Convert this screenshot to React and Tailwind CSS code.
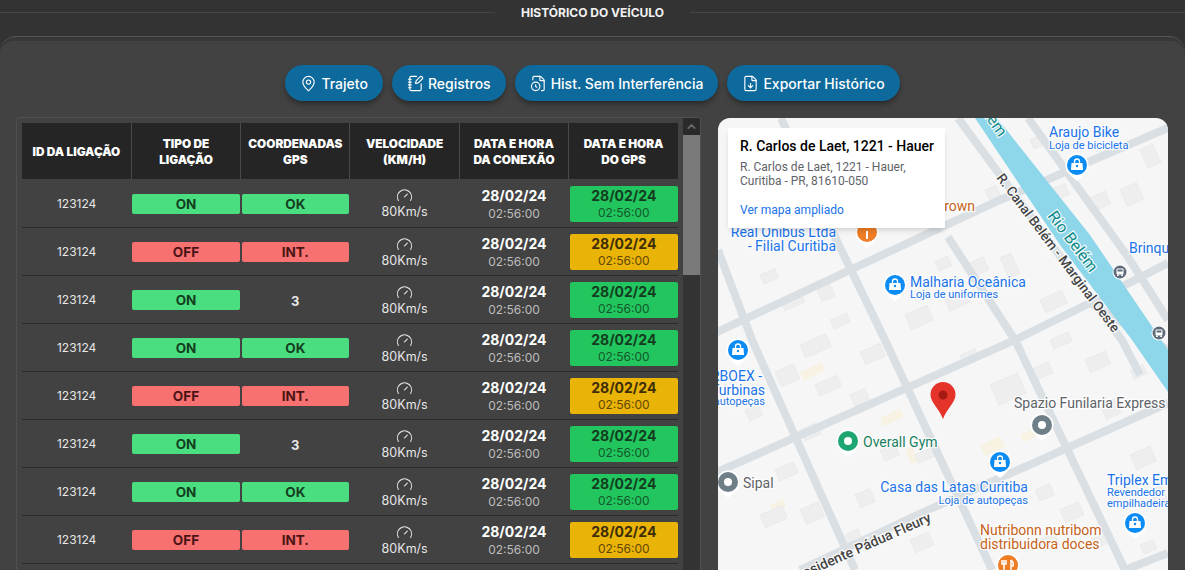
import { MapPin, NotebookPen, FileClock, FileDown, Gauge, ChevronUp } from 'lucide-react';

const rows = [
  { power: 'ON', gps: 'OK' },
  { power: 'OFF', gps: 'INT.' },
  { power: 'ON', gps: '3' },
  { power: 'ON', gps: 'OK' },
  { power: 'OFF', gps: 'INT.' },
  { power: 'ON', gps: '3' },
  { power: 'ON', gps: 'OK' },
  { power: 'OFF', gps: 'INT.' },
];

const headers = [
  ['ID DA LIGAÇÃO'],
  ['TIPO DE', 'LIGAÇÃO'],
  ['COORDENADAS', 'GPS'],
  ['VELOCIDADE', '(KM/H)'],
  ['DATA E HORA', 'DA CONEXÃO'],
  ['DATA E HORA', 'DO GPS'],
];

const actions = [
  { label: 'Trajeto', Icon: MapPin },
  { label: 'Registros', Icon: NotebookPen },
  { label: 'Hist. Sem Interferência', Icon: FileClock },
  { label: 'Exportar Histórico', Icon: FileDown },
];

// map geometry, in page coordinates (viewBox starts at the map corner)
const roads = [
  'M718 250 L752 340 L855 570',
  'M781 118 L835 237 L885 340 L992 570',
  'M948 237 L1015 340 L1125 570',
  'M958 118 L1122 340 L1140 375',
  'M1028 118 L1128 257 L1168 320',
  'M715 333 L1000 200 L1168 128',
  'M715 473 L1015 340 L1090 303 L1168 263',
  'M800 570 L928 510 L1168 403',
  'M1125 570 L1168 553',
  'M1090 303 L1168 350',
];

const buildings = [
  [780, 300, 22, 12], [815, 285, 14, 18], [760, 275, 16, 10], [800, 345, 28, 14], [830, 320, 18, 10],
  [775, 372, 20, 16], [815, 385, 24, 12], [860, 352, 22, 14], [850, 395, 16, 20], [905, 315, 24, 16],
  [945, 300, 22, 12], [965, 265, 20, 14], [935, 262, 14, 10], [1000, 258, 12, 22], [1050, 190, 16, 12],
  [1085, 200, 22, 14], [1120, 190, 18, 18], [1140, 150, 14, 20], [1030, 140, 14, 10], [985, 190, 12, 16],
  [1040, 300, 24, 14], [1050, 340, 20, 10], [1085, 360, 22, 14], [1130, 370, 14, 10], [1100, 405, 16, 16],
  [990, 385, 30, 22], [1030, 370, 20, 12], [960, 355, 16, 9], [880, 450, 16, 12], [915, 455, 20, 9],
  [800, 430, 18, 12], [775, 470, 20, 12], [760, 515, 24, 14], [800, 510, 20, 16], [855, 495, 16, 14],
  [845, 535, 14, 16], [910, 540, 20, 14], [1035, 490, 16, 12], [1060, 510, 20, 14], [1040, 540, 16, 12],
  [1130, 455, 22, 16], [1150, 490, 12, 18], [1090, 540, 14, 10], [1140, 545, 14, 10], [745, 410, 14, 12],
];

const tanBlocks = [
  [800, 372, 24, 9], [880, 418, 22, 9], [980, 445, 22, 12], [1020, 435, 20, 8], [905, 450, 8, 16], [770, 505, 14, 8],
];

function Pin({ x, y, color, glyph = 'dot' }) {
  return (
    <g transform={`translate(${x} ${y})`}>
      <path d="M-11.5 4 Q-8 10 0 16 Q8 10 11.5 4 Z" fill="#ffffff" />
      <circle r="11.5" fill="#ffffff" />
      <circle r="10" fill={color} />
      {glyph === 'dot' && <circle r="4" fill="#ffffff" />}
      {glyph === 'bag' && (
        <>
          <path d="M-5.5 -2 H5.5 L6 5 H-6 Z" fill="#ffffff" />
          <path d="M-2.5 -2 V-3.5 A2.5 2.5 0 0 1 2.5 -3.5 V-2" fill="none" stroke="#ffffff" strokeWidth="1.3" />
          <circle cy="1" r="1.2" fill={color} />
        </>
      )}
      {glyph === 'food' && (
        <path d="M-4 -5 V5 M-6 -5 V-1 H-2 V-5 M3 -5 V5 M3 -5 Q6 -3 5 1 H3" fill="none" stroke="#ffffff" strokeWidth="1.5" />
      )}
      {glyph === 'one' && <rect x="-1" y="-1" width="2" height="8" fill="#ffffff" />}
    </g>
  );
}

function BusStop({ x, y }) {
  return (
    <g transform={`translate(${x} ${y})`}>
      <circle r="7.5" fill="#ffffff" />
      <circle r="6.5" fill="#5f6b7a" />
      <rect x="-3.5" y="-3.5" width="7" height="6" rx="1" fill="#ffffff" />
      <rect x="-2.5" y="-2.5" width="5" height="2" fill="#5f6b7a" />
      <rect x="-3" y="2.5" width="1.8" height="1.5" fill="#ffffff" />
      <rect x="1.2" y="2.5" width="1.8" height="1.5" fill="#ffffff" />
    </g>
  );
}

function Label({ x, y, size = 14, color = '#1a73e8', anchor = 'start', weight = 400, rotate, children }) {
  return (
    <text
      x={x}
      y={y}
      fontSize={size}
      fontWeight={weight}
      fill={color}
      textAnchor={anchor}
      stroke="#ffffff"
      strokeWidth="2.5"
      paintOrder="stroke"
      strokeOpacity="0.85"
      transform={rotate ? `rotate(${rotate} ${x} ${y})` : undefined}
    >
      {children}
    </text>
  );
}

function MapDrawing() {
  return (
    <svg viewBox="718 118 450 452" className="block w-full h-full font-['Roboto',sans-serif]">
      <rect x="718" y="118" width="450" height="452" fill="#f6f6f7" />
      {tanBlocks.map(([x, y, w, h], i) => (
        <rect key={i} x={x} y={y} width={w} height={h} fill="#f8f2e3" transform={`rotate(-24 ${x} ${y})`} />
      ))}
      {buildings.map(([x, y, w, h], i) => (
        <rect key={i} x={x} y={y} width={w} height={h} fill="#eeeeef" stroke="#e4e4e6" strokeWidth="0.5" transform={`rotate(-24 ${x} ${y})`} />
      ))}
      {roads.map((d, i) => (
        <path key={i} d={d} fill="none" stroke="#d9dfe3" strokeWidth="8" />
      ))}
      <path d="M975 118 H997 L1090 235 L1168 350 V392 L1132 340 L1060 245 Z" fill="#8ed6ea" />

      <Label x={984} y={116} size={16} color="#0f8a8a" rotate={55}>lém</Label>
      <Label x={1047} y={216} size={16} color="#0f8a8a" rotate={53}>Rio Belém</Label>
      <Label x={996} y={178} size={13.5} color="#444444" weight={500} rotate={53}>R. Canal Belém - Marginal Oeste</Label>
      <Label x={932} y={521} size={14} color="#444444" weight={500} anchor="end" rotate={-24}>Presidente Pádua Fleury</Label>

      <Label x={1049} y={137}>Araujo Bike</Label>
      <Label x={1049} y={149} size={11}>Loja de bicicleta</Label>
      <Label x={836} y={237} anchor="end">Real Onibus Ltda</Label>
      <Label x={836} y={251} anchor="end">- Filial Curitiba</Label>
      <Label x={975} y={211} color="#c5621a" anchor="end">Brown</Label>
      <Label x={910} y={287}>Malharia Oceânica</Label>
      <Label x={910} y={298} size={11}>Loja de uniformes</Label>
      <Label x={1129} y={253}>Brinquedos</Label>
      <Label x={762} y={381} anchor="end">RBOEX -</Label>
      <Label x={765} y={395} anchor="end">Turbinas</Label>
      <Label x={765} y={405} size={11} anchor="end">autopeças</Label>
      <Label x={1014} y={408} color="#5f6368">Spazio Funilaria Express</Label>
      <Label x={863} y={447} color="#188060">Overall Gym</Label>
      <Label x={743} y={488} color="#5f6368">Sipal</Label>
      <Label x={1028} y={492} anchor="end">Casa das Latas Curitiba</Label>
      <Label x={1028} y={504} size={11} anchor="end">Loja de autopeças</Label>
      <Label x={1107} y={485}>Triplex Empilhadeiras</Label>
      <Label x={1107} y={496} size={11}>Revendedor de</Label>
      <Label x={1107} y={507} size={11}>empilhadeiras</Label>
      <Label x={980} y={535} color="#c5621a">Nutribonn nutribom</Label>
      <Label x={980} y={549} color="#c5621a">distribuidora doces</Label>

      <Pin x={1077} y={165} color="#0b8cf5" glyph="bag" />
      <Pin x={895} y={285} color="#0b8cf5" glyph="bag" />
      <Pin x={738} y={350} color="#0b8cf5" glyph="bag" />
      <Pin x={1000} y={462} color="#0b8cf5" glyph="bag" />
      <Pin x={1135} y={523} color="#0b8cf5" glyph="bag" />
      <Pin x={1042} y={425} color="#6e7f88" />
      <Pin x={728} y={482} color="#6e7f88" />
      <Pin x={848} y={441} color="#1ea672" />
      <Pin x={867} y={232} color="#ee7d26" glyph="one" />
      <Pin x={1008} y={565} color="#ee7d26" glyph="food" />
      <BusStop x={1120} y={272} />
      <BusStop x={1159} y={333} />

      {/* red marker */}
      <path d="M943 419 C939 408 930.500 403 930.500 394.500 A12.500 12.500 0 0 1 955.500 394.500 C955.500 403 947 408 943 419 Z" fill="#e5352b" />
      <circle cx="943" cy="395" r="4.500" fill="#a61a14" />
    </svg>
  );
}

function StatusBadge({ value }) {
  if (value === '3') {
    return <span className="font-bold text-[13px] text-[#e8e8e8]">3</span>;
  }
  const good = value === 'ON' || value === 'OK';
  return (
    <div className={`h-5 rounded-[2px] flex items-center justify-center font-bold text-[13.5px] ${good ? 'bg-[#4ade80] text-[#14401f]' : 'bg-[#f87171] text-[#4a1414]'}`}>
      {value}
    </div>
  );
}

function HistoryRow({ row }) {
  const connected = row.power === 'ON';
  return (
    <tr className="h-12 border-b border-[#2b2b2b] [&>td]:pt-0.5">
      <td className="text-center text-[12px] text-[#e6e6e6] p-0">123124</td>
      <td className="p-0 pl-px pr-px"><StatusBadge value={row.power} /></td>
      <td className="p-0 pl-px pr-px text-center"><StatusBadge value={row.gps} /></td>
      <td className="p-0 text-center">
        <div className="flex flex-col items-center">
          <Gauge size={17} strokeWidth={1.5} className="text-[#e6e6e6]" />
          <span className="text-[12.5px] leading-4 text-[#e6e6e6]">80Km/s</span>
        </div>
      </td>
      <td className="p-0 text-center">
        <div className="pt-px">
          <div className="text-[14px] font-bold leading-[18px] text-white">28/02/24</div>
          <div className="mt-px text-[12px] leading-4 text-[#bdbdbd]">02:56:00</div>
        </div>
      </td>
      <td className="p-0 pl-px">
        <div className={`h-9 rounded-[2px] flex flex-col items-center justify-center ${connected ? 'bg-[#22c55e] text-[#123d20]' : 'bg-[#eab308] text-[#3d2d06]'}`}>
          <div className="text-[14px] font-bold leading-[18px]">28/02/24</div>
          <div className="text-[12px] leading-4 opacity-80">02:56:00</div>
        </div>
      </td>
    </tr>
  );
}

export default function App() {
  return (
    <div className="h-[570px] overflow-hidden bg-[#333333] font-['Inter',sans-serif]">
      <div className="h-9 flex items-start">
        <div className="flex-1 mt-3 border-t border-[#454545]" />
        <h1 className="px-[26px] pt-[5px] text-[12px] leading-4 font-bold text-[#f2f2f2] whitespace-nowrap">HISTÓRICO DO VEÍCULO</h1>
        <div className="flex-1 mt-3 border-t border-[#454545]" />
      </div>

      <div className="h-[534px] rounded-t-[16px] border-t border-[#565656] pt-1 bg-[#383838]">
        <div className="h-full rounded-t-[14px] bg-[#424242] px-4">
          <div className="flex justify-center gap-[9px] pt-6">
            {actions.map(({ label, Icon }) => (
              <button key={label} className="h-9 px-[15px] rounded-full bg-[#0e6a9c] shadow-md shadow-black/30 text-white text-[14px] font-medium flex items-center gap-1">
                <Icon size={17} strokeWidth={1.6} />
                {label}
              </button>
            ))}
          </div>

          <div className="flex gap-[17px] mt-4">
            <div className="w-[685px] shrink-0 h-[500px] flex border border-[#505050] rounded-t-[3px] overflow-hidden">
              <div className="w-[666px] pl-[5px] pr-[5px] pt-[5px]">
                <table className="w-full table-fixed border-collapse">
                  <thead>
                    <tr className="h-14 bg-[#252525]">
                      {headers.map((lines, i) => (
                        <th key={i} className={`p-0 pt-0.5 text-center text-[11.8px] leading-4 font-black text-white ${i > 0 ? 'border-l border-[#4a4a4a]' : ''}`}>
                          {lines.map((line) => (
                            <div key={line} className="whitespace-nowrap">{line}</div>
                          ))}
                        </th>
                      ))}
                    </tr>
                  </thead>
                  <tbody>
                    {rows.map((row, i) => (
                      <HistoryRow key={i} row={row} />
                    ))}
                  </tbody>
                </table>
              </div>
              <div className="w-[17px] flex flex-col bg-[#333333]">
                <div className="h-[17px] bg-[#2a2a2a] flex items-center justify-center">
                  <ChevronUp size={13} strokeWidth={3} className="text-[#6b6b6b]" />
                </div>
                <div className="h-[140px] bg-[#7a7a7a]" />
              </div>
            </div>

            <div className="relative mt-px w-[450px] h-[452px] rounded-t-[12px] overflow-hidden shrink-0">
              <MapDrawing />
              <div className="absolute left-[10px] top-[10px] w-[217px] h-[100px] bg-white shadow-md px-3 pt-[9px] font-['Roboto',sans-serif]">
                <div className="text-[14px] leading-[18px] font-medium text-black whitespace-nowrap">R. Carlos de Laet, 1221 - Hauer</div>
                <div className="mt-[5px] text-[12px] leading-[14px] text-[#5f6368]">R. Carlos de Laet, 1221 - Hauer,<br />Curitiba - PR, 81610-050</div>
                <div className="mt-[15px] text-[12px] leading-[14px] text-[#1a73e8]">Ver mapa ampliado</div>
              </div>
            </div>
          </div>
        </div>
      </div>
    </div>
  );
}
